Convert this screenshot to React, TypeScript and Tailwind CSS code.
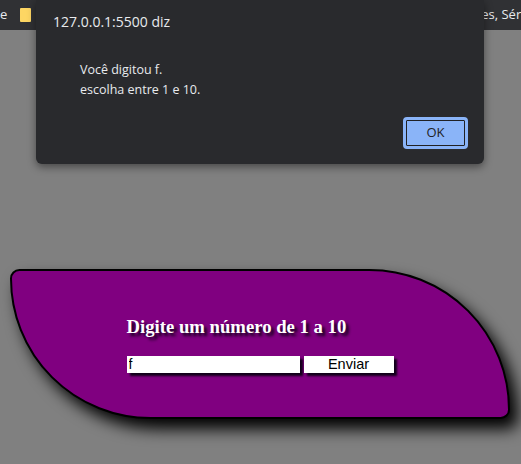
export default function App() {
  return (
    <div className="relative h-[464px] w-[521px] overflow-hidden bg-[#808080]">
      {/* bookmark bar behind the alert */}
      <div className="flex h-[30px] items-center justify-between bg-[#303134] font-['Open_Sans',sans-serif] text-[13px] text-[#e8eaed]">
        <div className="flex items-center gap-[13px]">
          <span>e</span>
          <span className="h-[14px] w-[11px] rounded-[1px] bg-[#fdd663]" />
        </div>
        <span className="-mr-[17px] whitespace-nowrap">Filmes, Séries</span>
      </div>

      {/* page */}
      <div className="pl-[10px] pt-[239px]">
        <div className="h-[150px] w-[500px] rounded-[10px_150px] border-2 border-black bg-[#800080] pt-[45px] shadow-[8px_10px_16px_#000]">
          <div className="mx-auto w-[267px]">
            <h2 className="font-['Liberation_Serif',serif] text-[18.7px] font-bold leading-[21px] text-white [text-shadow:3px_3px_3px_#12001a]">
              Digite um número de 1 a 10
            </h2>
            <div className="mt-[19px] flex gap-[4px]">
              <input
                defaultValue="f"
                className="h-[17px] w-[173px] bg-white pl-[2px] font-['Liberation_Sans',sans-serif] text-[14px] text-black shadow-[3px_3px_2px_#12001a] outline-none"
              />
              <button className="h-[17px] w-[90px] bg-white font-['Liberation_Sans',sans-serif] text-[14.5px] leading-[17px] text-black shadow-[3px_3px_2px_#12001a]">
                Enviar
              </button>
            </div>
          </div>
        </div>
      </div>

      {/* alert dialog */}
      <div className="absolute left-[36px] top-0 h-[164px] w-[448px] rounded-b-[6px] bg-[#292a2d] font-['Open_Sans',sans-serif] text-[#e8eaed] shadow-[0_3px_8px_rgba(0,0,0,0.45)]">
        <div className="pl-[17px] pt-[10px] text-[14px] leading-[24px]">127.0.0.1:5500 diz</div>
        <div className="pl-[44px] pt-[26px] text-[12.5px] leading-[20px]">
          <div>Você digitou f.</div>
          <div>escolha entre 1 e 10.</div>
        </div>
        <button className="absolute right-[16px] top-[117px] flex h-[32px] w-[65px] items-center justify-center rounded-[4px] border-2 border-[#8ab4f8] bg-[#8ab4f8] text-[13px] text-[#202124] outline outline-1 outline-offset-[-4px] outline-[#202124]">
          OK
        </button>
      </div>
    </div>
  );
}
